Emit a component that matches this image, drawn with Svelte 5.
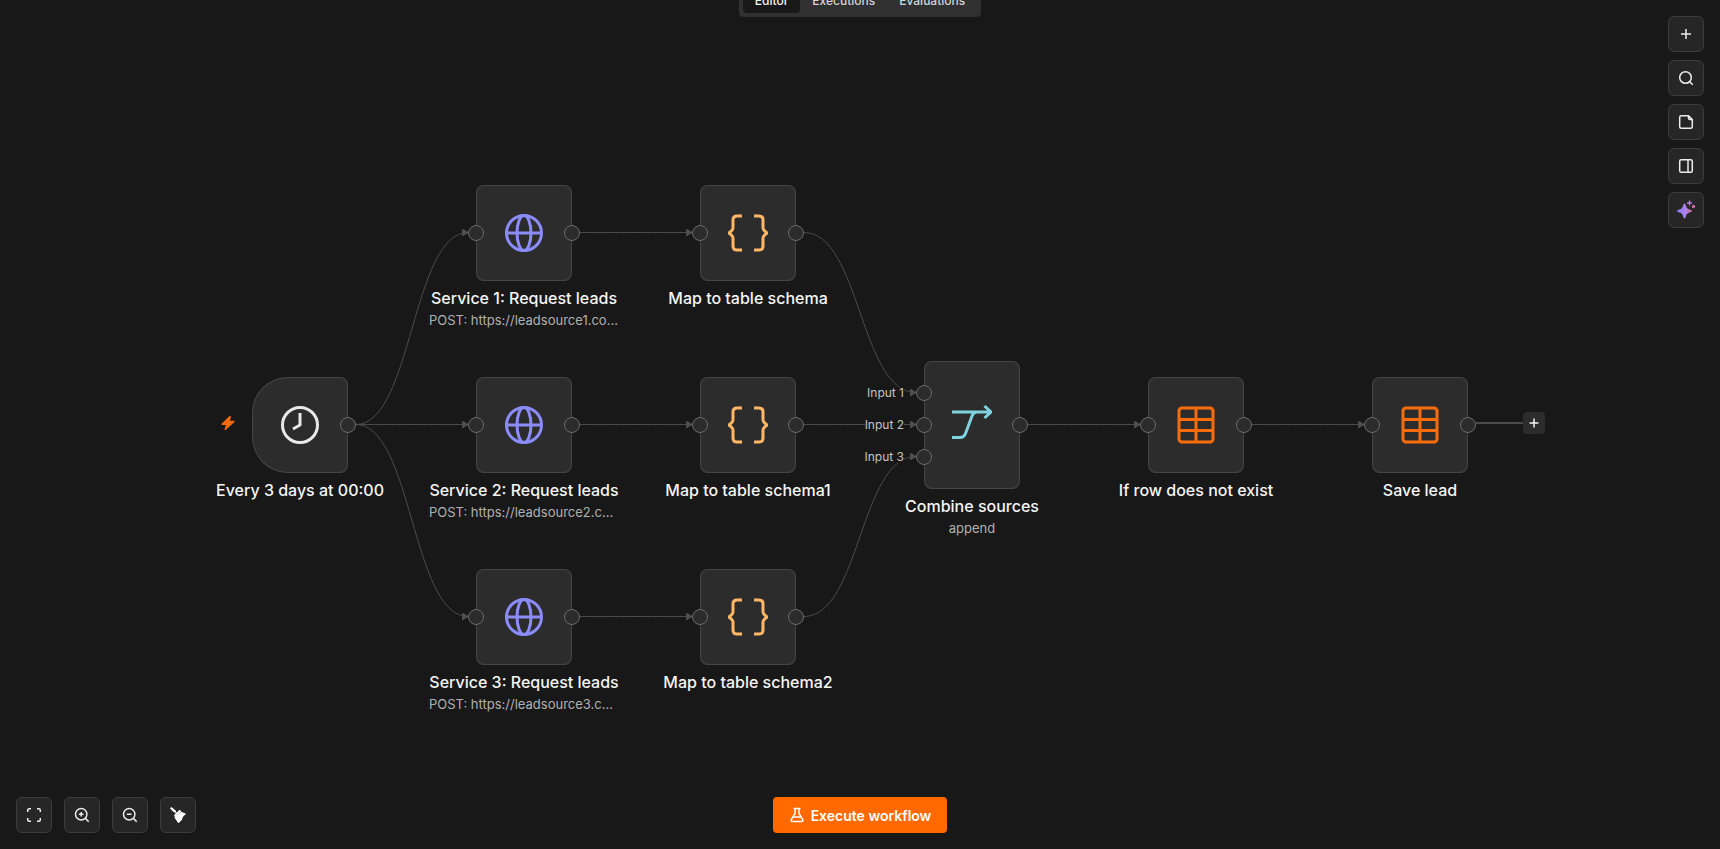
<script lang="ts">
  type IconName = "clock" | "globe" | "braces" | "merge" | "table";

  interface FlowNode {
    id: string;
    icon: IconName;
    title: string;
    subtitle?: string;
    x: number;
    y: number;
    height?: number;
    trigger?: boolean;
    inputs?: string[];
  }

  const SIZE = 96;
  const nodes: FlowNode[] = [
    { id: "schedule", icon: "clock", title: "Every 3 days at 00:00", x: 0, y: 192, trigger: true, inputs: [] },
    { id: "service1", icon: "globe", title: "Service 1: Request leads", subtitle: "POST: https://leadsource1.com/leads", x: 224, y: 0 },
    { id: "service2", icon: "globe", title: "Service 2: Request leads", subtitle: "POST: https://leadsource2.com/leads", x: 224, y: 192 },
    { id: "service3", icon: "globe", title: "Service 3: Request leads", subtitle: "POST: https://leadsource3.com/leads", x: 224, y: 384 },
    { id: "map", icon: "braces", title: "Map to table schema", x: 448, y: 0 },
    { id: "map1", icon: "braces", title: "Map to table schema1", x: 448, y: 192 },
    { id: "map2", icon: "braces", title: "Map to table schema2", x: 448, y: 384 },
    { id: "combine", icon: "merge", title: "Combine sources", subtitle: "append", x: 672, y: 176, height: 128, inputs: ["Input 1", "Input 2", "Input 3"] },
    { id: "exists", icon: "table", title: "If row does not exist", x: 896, y: 192 },
    { id: "save", icon: "table", title: "Save lead", x: 1120, y: 192 },
  ];

  const links: [string, string, number][] = [
    ["schedule", "service1", 0],
    ["schedule", "service2", 0],
    ["schedule", "service3", 0],
    ["service1", "map", 0],
    ["service2", "map1", 0],
    ["service3", "map2", 0],
    ["map", "combine", 0],
    ["map1", "combine", 1],
    ["map2", "combine", 2],
    ["combine", "exists", 0],
    ["exists", "save", 0],
  ];

  const tabs = ["Editor", "Executions", "Evaluations"];
  let activeTab = $state("Editor");

  function inputY(node: FlowNode, index: number): number {
    const count = node.inputs?.length || 1;
    return (node.height ?? SIZE) / 2 + (index - (count - 1) / 2) * 32;
  }

  // half a pixel up keeps the straight 1px strokes crisp
  function edgePath([from, to, index]: [string, string, number]): string {
    const source = nodes.find((node) => node.id === from)!;
    const target = nodes.find((node) => node.id === to)!;
    const x1 = source.x + SIZE + 8;
    const y1 = source.y + (source.height ?? SIZE) / 2 - 0.5;
    const x2 = target.x - 8;
    const y2 = target.y + inputY(target, index) - 0.5;
    const mid = (x1 + x2) / 2;
    return `M${x1},${y1} C${mid},${y1} ${mid},${y2} ${x2},${y2}`;
  }
</script>

{#snippet nodeIcon(name: IconName)}
  <svg class="node-icon {name}" viewBox="0 0 40 40" aria-hidden="true">
    {#if name === "clock"}
      <circle cx="20" cy="20" r="17.5" />
      <path d="M20 8v12l-7 4" />
    {:else if name === "globe"}
      <circle cx="20" cy="20" r="17.5" />
      <ellipse cx="20" cy="20" rx="7" ry="17.5" />
      <path d="M2.5 20h35" />
    {:else if name === "braces"}
      <path d="M14 3H9q-4 0-4 4v8q0 2-4 5q4 3 4 5v8q0 4 4 4h5" />
      <path d="M26 3h5q4 0 4 4v8q0 2 4 5q-4 3-4 5v8q0 4-4 4h-5" />
    {:else if name === "merge"}
      <path d="M0 7h39M32.500 1l6.500 6l-6.500 6M0 32.500h8q4 0 5.500-4L20 11q1.500-4 5-4" />
    {:else}
      <rect x="3" y="3" width="34" height="34" rx="3" />
      <path d="M3 14.500h34M3 25.500h34M20 3v34" />
    {/if}
  </svg>
{/snippet}

<div class="editor">
  <header>
    <nav class="tabs" aria-label="Workflow views">
      {#each tabs as tab}
        <button class="tab" class:active={tab === activeTab} onclick={() => (activeTab = tab)}>{tab}</button>
      {/each}
    </nav>
  </header>

  <main>
    <div class="flow">
      <svg class="edges" viewBox="0 0 1216 480" aria-hidden="true">
        <defs>
          <marker id="arrow" viewBox="0 0 7 8" markerWidth="7" markerHeight="8" refX="6" refY="4" markerUnits="userSpaceOnUse">
            <path class="arrow" d="M0 0l7 4l-7 4z" />
          </marker>
        </defs>
        {#each links as link}
          <path class="edge" d={edgePath(link)} marker-end="url(#arrow)" />
        {/each}
        <path class="edge loose" d="M1224 238h48" />
      </svg>

      {#each nodes as node (node.id)}
        <div class="node" style:left="{node.x}px" style:top="{node.y}px">
          <div class="card" class:trigger={node.trigger} class:tall={node.height === 128}>
            {@render nodeIcon(node.icon)}
            {#if node.trigger}
              <svg class="bolt" viewBox="0 0 16 16" aria-hidden="true">
                <path d="M9.500 1L1.500 8.800q-.5 1 .5 1.200h4L4.500 14.500q.4 1 1.200.5L14.500 7q.5-1-.5-1.200h-4L11 1.500q-.5-1-1.500-.5z" />
              </svg>
            {/if}
            {#each node.inputs ?? [""] as label, i}
              <span class="handle in" style:top="{inputY(node, i)}px"></span>
              {#if label}
                <span class="input-label" style:top="{inputY(node, i)}px">{label}</span>
              {/if}
            {/each}
            <span class="handle out"></span>
          </div>
          <div class="title">{node.title}</div>
          {#if node.subtitle}
            <div class="subtitle">{node.subtitle}</div>
          {/if}
        </div>
      {/each}

      <button class="add-next" aria-label="Add next node">
        <svg viewBox="0 0 16 16"><path d="M8 2v12M2 8h12" /></svg>
      </button>
    </div>
  </main>

  <aside class="tools">
    <button class="square" aria-label="Add node">
      <svg viewBox="0 0 16 16"><path d="M8 3v10M3 8h10" /></svg>
    </button>
    <button class="square" aria-label="Search">
      <svg viewBox="0 0 16 16"><circle cx="7.500" cy="7.500" r="5.800" /><path d="M11.700 11.700l3 3" /></svg>
    </button>
    <button class="square" aria-label="Add sticky note">
      <svg viewBox="0 0 16 16"><path d="M10.500 1.800H3.200q-1.500 0-1.500 1.500v9.400q0 1.500 1.500 1.500h9.600q1.500 0 1.500-1.500V5.600zM10.500 1.800v2.400q0 1.400 1.400 1.400h2.400" /></svg>
    </button>
    <button class="square" aria-label="Toggle panel">
      <svg viewBox="0 0 16 16"><rect x="1.700" y="1.700" width="12.600" height="12.600" rx="1.500" /><path d="M10 1.700v12.600" /></svg>
    </button>
    <button class="square" aria-label="Ask assistant">
      <svg class="sparkle" viewBox="0 0 20 20">
        <defs>
          <linearGradient id="spark" x1="0" y1="0" x2="1" y2="0">
            <stop offset="0" stop-color="#8b7cf8" />
            <stop offset="0.550" stop-color="#a982ee" />
            <stop offset="1" stop-color="#d66a9a" />
          </linearGradient>
        </defs>
        <path fill="url(#spark)" d="M8.500 3.500q.7 0 1 1l1 2.700q.5 1.300 1.800 1.800l2.700 1q1 .3 1 1t-1 1l-2.700 1q-1.300.5-1.800 1.800l-1 2.700q-.3 1-1 1t-1-1l-1-2.700q-.5-1.300-1.800-1.800l-2.700-1q-1-.3-1-1t1-1l2.700-1q1.300-.5 1.800-1.800l1-2.700q.3-1 1-1z" />
        <path class="small-plus" d="M13.500.5v5M11 3h5" />
        <circle cx="17.500" cy="6.500" r="1.700" fill="#c9679f" />
      </svg>
    </button>
  </aside>

  <footer>
    <div class="controls">
      <button class="square" aria-label="Zoom to fit">
        <svg viewBox="0 0 16 16"><path d="M1.700 5V3.200q0-1.500 1.500-1.500H5M11 1.700h1.800q1.500 0 1.500 1.500V5M14.300 11v1.800q0 1.500-1.500 1.500H11M5 14.300H3.200q-1.500 0-1.500-1.500V11" /></svg>
      </button>
      <button class="square" aria-label="Zoom in">
        <svg viewBox="0 0 16 16"><circle cx="7.200" cy="7.200" r="5.700" /><path d="M11.400 11.400l3.300 3.300M7.200 4.900v4.600M4.900 7.200h4.600" /></svg>
      </button>
      <button class="square" aria-label="Zoom out">
        <svg viewBox="0 0 16 16"><circle cx="7.200" cy="7.200" r="5.700" /><path d="M11.400 11.400l3.300 3.300M4.900 7.200h4.600" /></svg>
      </button>
      <button class="square" aria-label="Tidy up">
        <svg class="broom" viewBox="0 0 16 16">
          <path d="M0 1.300l1.300-1.300l4.400 3.600l.4 1.300l.8.500l2.400-2.300l1.400.3l.4 1l-5.700 5.500l-1-.5l-.2-1.300l1.500-1.700l-.8-1.100l-1.400-.2z" />
          <path d="M11.200 4.700l4.800 2l-3.200 3.300l-.8 2.700l-3.600 3.600l-4-5.800z" />
        </svg>
      </button>
    </div>
    <button class="execute">
      <svg viewBox="0 0 16 16" aria-hidden="true"><path d="M4.500 1.500h7M6 1.500v5L2.300 12.700q-.8 1.800 1.200 1.800h9q2 0 1.200-1.800L10 6.500v-5M4.200 10h7.600" /></svg>
      Execute workflow
    </button>
  </footer>
</div>

<style>
  :global(body) {
    background: #181818;
  }

  .editor {
    position: relative;
    display: flex;
    flex-direction: column;
    min-height: 100vh;
    overflow: hidden;
    background: #181818;
    color: #f5f5f5;
    font-family: Inter, "Liberation Sans", sans-serif;
  }

  button {
    padding: 0;
    border: 0;
    color: inherit;
    font-family: inherit;
    cursor: pointer;
  }

  svg {
    display: block;
    fill: none;
    stroke: currentColor;
  }

  header {
    display: flex;
    align-items: flex-end;
    justify-content: center;
    height: 17px;
  }

  .tabs {
    display: flex;
    padding: 4px;
    border-radius: 4px;
    background: #303030;
  }

  .tab {
    height: 26px;
    padding: 0 12px;
    border-radius: 4px;
    background: transparent;
    color: #d4d4d4;
    font-size: 12px;
    font-weight: 500;
  }

  .tab.active {
    background: #181818;
    color: #f5f5f5;
  }

  main {
    display: grid;
    flex: 1;
    place-items: center;
    padding: 52px 0 0;
  }

  .flow {
    position: relative;
    width: 1216px;
    height: 480px;
  }

  .edges {
    position: absolute;
    inset: 0;
    width: 1216px;
    height: 480px;
    overflow: visible;
  }

  .edge {
    stroke: #4b4b4b;
  }

  .loose {
    stroke-width: 2;
  }

  .arrow {
    fill: #4f4f4f;
    stroke: none;
  }

  .node {
    position: absolute;
    display: flex;
    flex-direction: column;
    align-items: center;
    width: 96px;
  }

  .card {
    position: relative;
    display: grid;
    place-items: center;
    box-sizing: border-box;
    width: 96px;
    height: 96px;
    margin-bottom: 7px;
    border-radius: 8px;
    background: #2c2c2c;
    box-shadow: inset 0 0 0 1px #454545;
  }

  .trigger {
    border-radius: 36px 8px 8px 36px;
  }

  .tall {
    height: 128px;
  }

  .node-icon {
    width: 40px;
    height: 40px;
    stroke-width: 3;
  }

  .clock {
    color: #e8e8e8;
  }

  .globe {
    color: #8b8bfa;
  }

  .braces {
    color: #ffb766;
  }

  .merge {
    color: #7fd3e0;
  }

  .table {
    color: #f96c0c;
  }

  .bolt {
    position: absolute;
    top: 38px;
    left: -32px;
    width: 16px;
    height: 16px;
    fill: #f0690f;
    stroke: none;
  }

  .handle {
    position: absolute;
    top: 50%;
    box-sizing: border-box;
    width: 16px;
    height: 16px;
    border: 1px solid #6a6a6a;
    border-radius: 50%;
    background: #2c2c2c;
    transform: translate(-50%, -50%);
  }

  .in {
    left: 0;
  }

  .out {
    left: 100%;
  }

  .input-label {
    position: absolute;
    right: 116px;
    background: #181818;
    color: #c4c4c4;
    font-size: 12px;
    line-height: 12px;
    white-space: nowrap;
    transform: translateY(-50%);
  }

  .title {
    font-size: 16px;
    font-weight: 500;
    line-height: 20px;
    white-space: nowrap;
  }

  .subtitle {
    max-width: 190px;
    margin-top: 2px;
    overflow: hidden;
    color: #b0b0b0;
    font-size: 13px;
    line-height: 20px;
    text-overflow: ellipsis;
    white-space: nowrap;
  }

  .add-next {
    position: absolute;
    top: 227px;
    left: 1271px;
    display: grid;
    place-items: center;
    width: 22px;
    height: 22px;
    border-radius: 4px;
    background: #2c2c2c;
  }

  .add-next svg {
    width: 12px;
    height: 12px;
    stroke-width: 2;
  }

  .square {
    display: grid;
    place-items: center;
    width: 36px;
    height: 36px;
    border: 1px solid #3c3c3c;
    border-radius: 6px;
    background: #262626;
    color: #ececec;
  }

  .square svg {
    width: 16px;
    height: 16px;
    stroke-width: 1.5;
  }

  .square .sparkle {
    width: 20px;
    height: 20px;
    stroke: none;
  }

  .square .small-plus {
    stroke: #b57be6;
    stroke-width: 1.3;
  }

  .square .broom {
    fill: #fff;
    stroke: none;
  }

  .tools {
    position: absolute;
    top: 16px;
    right: 16px;
    display: grid;
    gap: 8px;
  }

  footer {
    display: grid;
    grid-template-columns: 1fr auto 1fr;
    padding: 16px;
  }

  .controls {
    display: flex;
    gap: 12px;
  }

  .execute {
    display: flex;
    align-items: center;
    gap: 6px;
    height: 36px;
    padding: 0 16px;
    border-radius: 4px;
    background: #ff6900;
    color: #fff;
    font-size: 14px;
    font-weight: 600;
  }

  .execute svg {
    width: 16px;
    height: 16px;
    stroke-width: 1.5;
  }
</style>
